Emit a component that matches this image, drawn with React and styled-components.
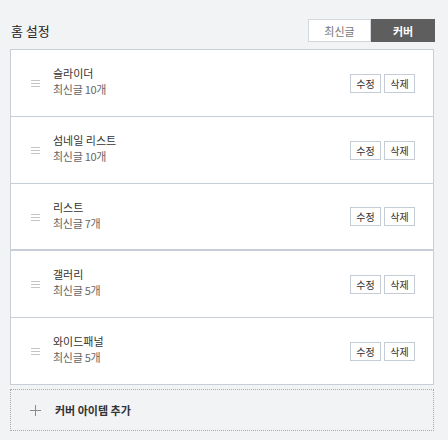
import React, { useState } from 'react';
import styled, { createGlobalStyle } from 'styled-components';

const GlobalStyle = createGlobalStyle`
  html, body {
    margin: 0;
    padding: 0;
    background: #f2f3f5;
    font-family: "Noto Sans CJK KR", "Noto Sans", sans-serif;
    color: #333333;
  }
`;

const items = [
  { title: '슬라이더', count: 10 },
  { title: '섬네일 리스트', count: 10 },
  { title: '리스트', count: 7, thick: true },
  { title: '갤러리', count: 5 },
  { title: '와이드패널', count: 5 },
];

function App() {
  const [mode, setMode] = useState('cover');

  return (
    <Page>
      <GlobalStyle />
      <Header>
        <Title>홈 설정</Title>
        <Toggle>
          <ToggleButton $active={mode === 'recent'} onClick={() => setMode('recent')}>
            최신글
          </ToggleButton>
          <ToggleButton $active={mode === 'cover'} onClick={() => setMode('cover')}>
            커버
          </ToggleButton>
        </Toggle>
      </Header>

      <List>
        {items.map((item, i) => (
          <Row key={item.title} $last={i === items.length - 1} $thick={item.thick}>
            <Handle width="9" height="7" viewBox="0 0 9 7">
              <rect x="0" y="0" width="9" height="1" fill="#c4c4c4" />
              <rect x="0" y="3" width="9" height="1" fill="#c4c4c4" />
              <rect x="0" y="6" width="9" height="1" fill="#c4c4c4" />
            </Handle>
            <Info>
              <ItemTitle>{item.title}</ItemTitle>
              <ItemSub>최신글 {item.count}개</ItemSub>
            </Info>
            <Actions>
              <SmallButton>수정</SmallButton>
              <SmallButton>삭제</SmallButton>
            </Actions>
          </Row>
        ))}
      </List>

      <AddItem>
        <svg width="11" height="11" viewBox="0 0 11 11">
          <rect x="5" y="0" width="1" height="11" fill="#8a8a8a" />
          <rect x="0" y="5" width="11" height="1" fill="#8a8a8a" />
        </svg>
        <AddLabel>커버 아이템 추가</AddLabel>
      </AddItem>
    </Page>
  );
}

export default App;

const Page = styled.div`
  padding: 19px 14px 0 10px;
`;

const Header = styled.div`
  display: flex;
  align-items: center;
  justify-content: space-between;
  height: 23px;
  margin-right: -1px;
  margin-bottom: 7px;
`;

const Title = styled.h1`
  margin: 0 0 0 1px;
  font-size: 13px;
  font-weight: 400;
  color: #222222;
`;

const Toggle = styled.div`
  display: flex;
  height: 23px;
`;

const ToggleButton = styled.button`
  width: 63px;
  height: 23px;
  padding: 0;
  font-family: inherit;
  font-size: 11px;
  cursor: pointer;
  border: 1px solid ${(p) => (p.$active ? '#5e5e5e' : '#d3d6db')};
  background: ${(p) => (p.$active ? '#5e5e5e' : '#ffffff')};
  color: ${(p) => (p.$active ? '#ffffff' : '#777777')};
  font-weight: ${(p) => (p.$active ? 700 : 400)};
  & + & {
    width: 64px;
  }
`;

const List = styled.div`
  background: #ffffff;
  border: 1px solid #c8ced7;
`;

const Row = styled.div`
  display: flex;
  align-items: center;
  height: ${(p) => (p.$thick ? 65 : 66)}px;
  padding: 0 18px 0 20px;
  border-bottom: ${(p) => (p.$last ? 'none' : `${p.$thick ? 2 : 1}px solid #c8ced7`)};
`;

const Handle = styled.svg`
  flex: none;
  margin-top: 1px;
`;

const Info = styled.div`
  flex: 1;
  display: flex;
  flex-direction: column;
  gap: 2px;
  margin-left: 13px;
  margin-bottom: 4px;
`;

const ItemTitle = styled.div`
  font-size: 11px;
  line-height: 14px;
  color: #333333;
`;

const ItemSub = styled.div`
  font-size: 11px;
  line-height: 14px;
  color: #666666;
  letter-spacing: -0.3px;
`;

const Actions = styled.div`
  display: flex;
  gap: 3px;
`;

const SmallButton = styled.button`
  width: 31px;
  height: 19px;
  padding: 0;
  border: 1px solid #c5ccd6;
  background: #ffffff;
  font-family: inherit;
  font-size: 10px;
  color: #333333;
  cursor: pointer;
`;

const AddItem = styled.div`
  display: flex;
  align-items: center;
  gap: 14px;
  height: 40px;
  margin-top: 4px;
  padding-left: 19px;
  border: 1px dotted #a9a9a9;
`;

const AddLabel = styled.span`
  font-size: 11px;
  font-weight: 700;
  color: #333333;
`;
